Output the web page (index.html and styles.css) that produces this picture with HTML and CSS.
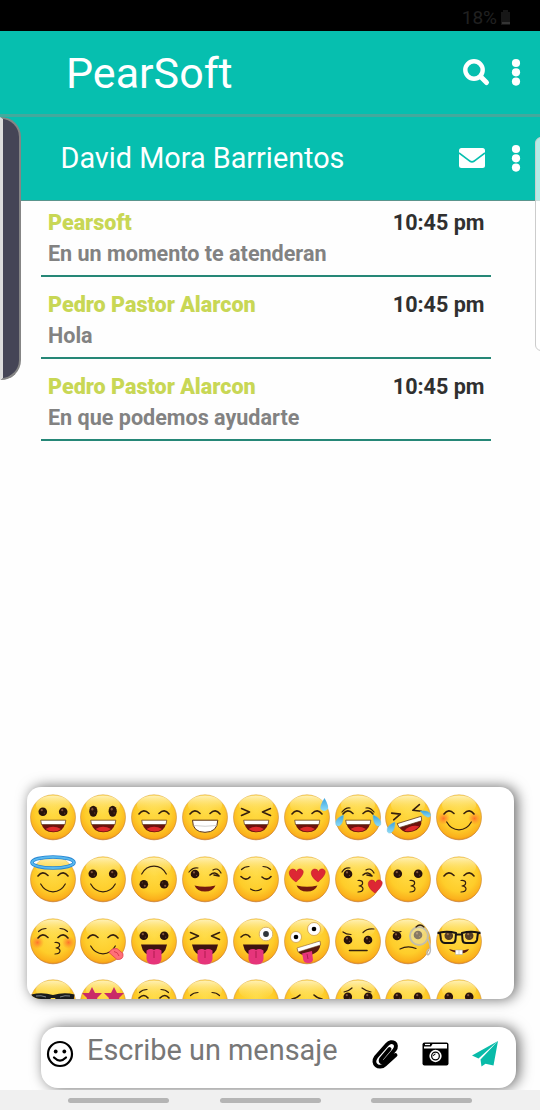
FILE: index.html
```html
<!DOCTYPE html>
<html lang="es">
<head>
<meta charset="utf-8">
<title>PearSoft</title>
<link rel="stylesheet" href="styles.css">
</head>
<body>
<svg class="defs" aria-hidden="true">
  <defs>
    <radialGradient id="skin" cx=".5" cy=".38" r=".66"><stop offset="0" stop-color="#ffdb45"/><stop offset=".6" stop-color="#fecd2a"/><stop offset=".86" stop-color="#fbb01c"/><stop offset="1" stop-color="#e27d10"/></radialGradient>
    <linearGradient id="shine" x2="0" y2="1"><stop stop-color="#fff7cf" stop-opacity=".85"/><stop offset="1" stop-color="#ffe25a" stop-opacity="0"/></linearGradient>
    <linearGradient id="rim" x2="0" y2="1"><stop stop-color="#dfae4c"/><stop offset="1" stop-color="#b8661a"/></linearGradient>
    <radialGradient id="blush"><stop stop-color="#ff642b" stop-opacity=".85"/><stop offset="1" stop-color="#ff812b" stop-opacity="0"/></radialGradient>
    <linearGradient id="water" x2="0" y2="1"><stop stop-color="#3aa3de"/><stop offset="1" stop-color="#8edcf7"/></linearGradient>
    <g id="face"><circle r="22.500" cy=".3" fill="url(#skin)" stroke="url(#rim)" stroke-width=".6"/><ellipse cy="-12" rx="17" ry="9.500" fill="url(#shine)"/></g>
    <g id="eye"><circle r="4.300" fill="#29130b"/><circle cx="-1" cy="-1.600" r="1.100" fill="#82533b"/><circle cx="1.500" cy="1.400" r=".6" fill="#6d402c"/></g>
    <g id="eyes"><use href="#eye" x="-10.200" y="-5.200"/><use href="#eye" x="10.200" y="-5.200"/></g>
    <g id="arcs" class="ink"><path d="M-15-3Q-10.500-9-5-3.500M5-3.500Q10.500-9 15-3"/></g>
    <g id="squint" class="ink"><path d="M-14.500-8.500-6.500-5-14.500-1.500M14.500-8.500 6.500-5 14.500-1.500"/></g>
    <g id="laugh"><path d="M-11.500 6.500H12Q10.500 15.300 .3 15.300Q-10 15.300-11.500 6.500Z" fill="#6e120e"/><path d="M-7.500 12Q0 7.500 8 12Q1 17-7.500 12Z" fill="#df2a2a"/><path d="M-12.300 3.200H12.800L12 7.600H-11.500Z" fill="#fff" stroke="#593117" stroke-width=".7" stroke-linejoin="round"/></g>
    <path id="smile" class="ink thin" d="M-12.300 5Q-8 12.800 0 12.800Q8 12.800 12.300 5"/>
    <path id="grin" d="M-10.500 6.500Q0 9 10.500 6.500Q8 12.500 0 12.500T-10.500 6.500Z" fill="#73190f"/>
    <path id="kiss" class="ink thin" d="M0 1.500C6 1 6 6 1 7C6.500 7 6.500 13 0 13"/>
    <path id="heart" d="M0 7C-10 0-7-6-3-6Q0-6 0-3Q2-7 5-6C10-4 6 2 0 7Z" fill="#dd2734" stroke="#b51c27" stroke-width=".5"/>
    <path id="tear" d="M4-6C-1-4-5-1-3.500 4C-1 7 4 4 4-6Z" fill="url(#water)" stroke="#75bdd7" stroke-width=".4"/>
    <g id="tongue"><path d="M-13 3.500H13Q11 15 0 15.500Q-11 15-13 3.500Z" fill="#3d1310"/><path d="M-7.500 9.500Q-3 7 0 9Q3 7 7.500 9.500V18Q7 23.500 0 23.500T-7.500 18Z" fill="#e6357b"/><path d="M0 10V17" stroke="#b01c50" stroke-width="1"/></g>
    <g id="blushes"><circle cx="-15.500" cy="1.500" r="6.500" fill="url(#blush)"/><circle cx="15.500" cy="1.500" r="6.500" fill="url(#blush)"/></g>
    <path id="brows" class="ink thin" d="M-14.500-9.500Q-11.500-12.500-7-12.500M7-12.500Q11.500-12.500 14.500-9.500"/>
    <path id="star" d="M0-9 3-3 10-3 5 2 8 10 0 6-7 10-5 2-10-3-3-3Z" fill="#c92a68"/>
    <g id="dots"><circle cx="5" cy="5" r="4.100"/><circle cx="5" cy="14.300" r="4.100"/><circle cx="5" cy="23.600" r="4.100"/></g>
  </defs>
</svg>

<div class="screen">
  <div class="status"><span>18%</span><svg width="11" height="15" viewBox="0 0 11 15"><path d="M3 0h5v2h2v13H1V2h2z" fill="#171717"/><path d="M2 12h8v2H2z" fill="#343434"/></svg></div>

  <header class="bar bar-app">
    <h1>PearSoft</h1>
    <svg class="search" width="28" height="28" viewBox="0 0 28 28"><circle cx="11" cy="11" r="8.700"/><path d="M18 18 23.500 23.500" stroke-width="5"/></svg>
    <svg class="more" width="10" height="29"><use href="#dots"/></svg>
  </header>
  <header class="bar bar-contact">
    <h2>David Mora Barrientos</h2>
    <svg class="mail" width="26" height="20" viewBox="0 0 26 20"><rect width="26" height="20" rx="2.500" fill="#fff"/><path d="M0 5 9.500 12.200Q13 15.500 16.500 12.200L26 5" fill="none" stroke="#06bfaf" stroke-width="1.600"/></svg>
    <svg class="more" width="10" height="29"><use href="#dots"/></svg>
  </header>

  <main class="messages">
    <article class="message"><div class="meta"><b>Pearsoft</b><time>10:45 pm</time></div><p>En un momento te atenderan</p></article>
    <article class="message"><div class="meta"><b>Pedro Pastor Alarcon</b><time>10:45 pm</time></div><p>Hola</p></article>
    <article class="message"><div class="meta"><b>Pedro Pastor Alarcon</b><time>10:45 pm</time></div><p>En que podemos ayudarte</p></article>
  </main>

  <section class="emoji-panel">
    <svg viewBox="-23 -23 46 46"><use href="#face"/><use href="#eyes"/><use href="#laugh"/></svg>
    <svg viewBox="-23 -23 46 46"><use href="#face"/><g transform="translate(0 1) scale(.95 1.300)"><use href="#eyes"/></g><use href="#laugh"/></svg>
    <svg viewBox="-23 -23 46 46"><use href="#face"/><use href="#arcs"/><use href="#laugh"/></svg>
    <svg viewBox="-23 -23 46 46"><use href="#face"/><use href="#arcs"/><path d="M-12.500 3.200H12.800Q12.500 15.300 0 15.300T-12.500 3.200Z" fill="#fff" stroke="#593117"/><path d="M-11 8.500Q0 10 11.500 8.500" fill="none" stroke="#bbb" stroke-width=".7"/></svg>
    <svg viewBox="-23 -23 46 46"><use href="#face"/><use href="#squint"/><use href="#laugh"/></svg>
    <svg viewBox="-23 -23 46 46"><use href="#face"/><use href="#arcs"/><use href="#laugh"/><path d="M17.500-19Q12.500-11 13.500-8Q17-4 21-8Q22-11 17.500-19Z" fill="url(#water)"/></svg>
    <svg viewBox="-23 -23 46 46"><use href="#face"/><use href="#arcs"/><path class="ink thin" d="M-16-5Q-12-10-8-9M8-9Q12-10 16-5"/><use href="#laugh"/><use href="#tear" x="-18.500" y="4"/><g transform="translate(19 4) scale(-1 1)"><use href="#tear"/></g></svg>
    <svg viewBox="-23 -23 46 46"><use href="#face"/><g transform="rotate(-17)"><use href="#squint"/><use href="#laugh"/></g><use href="#tear" x="-17" y="11"/><path d="M12-6Q20-7 22.500-3Q23 1 19 0Q15-2 12-6Z" fill="url(#water)" stroke="#75bdd7" stroke-width=".4"/></svg>
    <svg viewBox="-23 -23 46 46"><use href="#face"/><use href="#blushes"/><use href="#arcs"/><use href="#smile"/></svg>

    <svg viewBox="-23 -23 46 46"><use href="#face"/><use href="#arcs"/><use href="#smile"/><ellipse cy="-16.500" rx="21" ry="5.500" fill="none" stroke="#2684d1" stroke-width="3.600"/><ellipse cy="-16.500" rx="21" ry="5.500" fill="none" stroke="#58b9ef" stroke-width="2"/></svg>
    <svg viewBox="-23 -23 46 46"><use href="#face"/><use href="#eyes"/><use href="#smile"/></svg>
    <svg viewBox="-23 -23 46 46"><use href="#face"/><g transform="rotate(180)"><use href="#eyes"/><use href="#smile"/></g></svg>
    <svg viewBox="-23 -23 46 46"><use href="#face"/><use href="#eye" x="-10" y="-5"/><path class="ink thin" d="M-16-7Q-12-12-7-11M8-9Q13-12 16-6"/><path class="ink" d="M5-4Q10-8.500 14-3L9-4"/><use href="#grin"/></svg>
    <svg viewBox="-23 -23 46 46"><use href="#face"/><use href="#brows"/><path class="ink" d="M-15-2.500Q-10 2.500-6-2M6-2Q11 2.500 15-2.500"/><path class="ink thin" d="M-5.500 10Q0 13.500 5.500 10"/></svg>
    <svg viewBox="-23 -23 46 46"><use href="#face"/><use href="#heart" x="-11" y="-4"/><use href="#heart" x="11" y="-4"/><use href="#grin"/></svg>
    <svg viewBox="-23 -23 46 46"><use href="#face"/><use href="#eye" x="-10" y="-5"/><path class="ink thin" d="M-16-7Q-13-12-8-11M8-9Q13-12 16-6"/><path class="ink" d="M5-4Q10-8.500 14-3L9-4"/><use href="#kiss"/><use href="#heart" x="17" y="7"/></svg>
    <svg viewBox="-23 -23 46 46"><use href="#face"/><use href="#eyes"/><use href="#kiss" x="2"/></svg>
    <svg viewBox="-23 -23 46 46"><use href="#face"/><use href="#arcs"/><use href="#kiss" x="2"/></svg>

    <svg viewBox="-23 -23 46 46"><use href="#face"/><use href="#blushes"/><use href="#brows"/><use href="#arcs"/><use href="#kiss" x="2"/></svg>
    <svg viewBox="-23 -23 46 46"><use href="#face"/><use href="#arcs"/><use href="#smile"/><path d="M6 11.500Q9 6.500 14 7.500L20 12.500Q21 19 14 18.500Z" fill="#ff7078" stroke="#dc3749" stroke-width=".7"/><path d="M11 10.500Q15 11 16 15" fill="none" stroke="#d83c50"/></svg>
    <svg viewBox="-23 -23 46 46"><use href="#face"/><use href="#eyes"/><use href="#tongue"/></svg>
    <svg viewBox="-23 -23 46 46"><use href="#face"/><use href="#squint"/><use href="#tongue"/></svg>
    <svg viewBox="-23 -23 46 46"><use href="#face"/><path class="ink" d="M-15-4Q-10-9-6-4"/><circle cx="10" cy="-7" r="6.800" fill="#fff" stroke="#d8b46c"/><circle cx="10" cy="-7" r="2.900" fill="#30363b"/><use href="#tongue"/></svg>
    <svg viewBox="-23 -23 46 46"><use href="#face"/><circle cx="-11" cy="-4" r="5.500" fill="#fff" stroke="#c9943c" stroke-width=".7"/><circle cx="-11" cy="-4" r="2.300"/><circle cx="7" cy="-12" r="6.500" fill="#fff" stroke="#c9943c" stroke-width=".7"/><circle cx="7" cy="-12" r="2.300"/><path d="M-10 8 13 0Q15 11 3 14Q-8 16-10 8Z" fill="#561911"/><path d="M-10 7 13 0 13.500 4-9 11Z" fill="#fff" stroke="#76461e" stroke-width=".5"/><path d="M-5 12.500 5 10 6 19Q5 22.500 1 22Q-4 22-4 17Z" fill="#e6357b"/><path d="M0 13 1 18" stroke="#b01c50"/></svg>
    <svg viewBox="-23 -23 46 46"><use href="#face"/><use href="#eye" x="-10" y="-1"/><use href="#eye" x="10" y="-1"/><path class="ink thin" d="M-15-9Q-12-6.500-7-6.500M5-8.500Q9-13 16-12"/><path class="ink" d="M-8.500 9.500H9"/></svg>
    <svg viewBox="-23 -23 46 46"><use href="#face"/><use href="#eye" x="-11" y="-5"/><use href="#eye" x="10" y="-6"/><circle cx="11" cy="-5" r="9" fill="#e6e1be" fill-opacity=".5" stroke="#c3beaa" stroke-width="2"/><path d="M20-2Q25 11 20 14Q17 11 21 8" fill="none" stroke="#bbb" stroke-width="1.300"/><path class="ink thin" d="M-15-10Q-11-8-7-9.500M8-14Q12-18 16-14M-8 8Q0 4 8 7.500"/></svg>
    <svg viewBox="-23 -23 46 46"><use href="#face"/><use href="#eyes"/><path d="M-19-8.500Q-11-10-3-8L-3.500-1Q-4 2-7 2H-14Q-17 2-18-1ZM19-8.500Q11-10 3-8L3.500-1Q4 2 7 2H14Q17 2 18-1ZM-3-6.500H3M-19-7.500-21.500-8.500M19-7.500 21.500-8.500" fill="#ffe58d" fill-opacity=".2" stroke="#161312" stroke-width="2" stroke-linejoin="round"/><path d="M-10 8Q0 11 10 8Q8 13 0 12T-10 8Z" fill="#571b11"/><path d="M-3.500 9H3.500V13.500H-3.500ZM0 9V13.500" fill="#fff" stroke="#aaa" stroke-width=".5"/></svg>

    <svg viewBox="-23 -23 46 46"><use href="#face"/><path d="M-21.500-7.500Q-11-10 0-7Q11-10 21.500-7.500L20 3Q9 8 2-4H-2Q-9 8-20 3Z" fill="#181b1d"/><path d="M-17-6Q-12-7-7-5M7-5Q12-7 17-6" fill="none" stroke="#7b858a"/></svg>
    <svg viewBox="-23 -23 46 46"><use href="#face"/><use href="#star" x="-11" y="-6"/><use href="#star" x="11" y="-6"/></svg>
    <svg viewBox="-23 -23 46 46"><use href="#face"/><use href="#brows"/><path class="ink" d="M-15-4Q-10-9-6-4M6-4Q11-9 15-4"/></svg>
    <svg viewBox="-23 -23 46 46"><use href="#face"/><g transform="translate(0 3)"><use href="#brows"/></g></svg>
    <svg viewBox="-23 -23 46 46"><use href="#face"/></svg>
    <svg viewBox="-23 -23 46 46"><use href="#face"/><path class="ink" d="M-15-3Q-10-4-7-7M7-7Q10-4 15-3"/></svg>
    <svg viewBox="-23 -23 46 46"><use href="#face"/><use href="#eyes"/><path class="ink thin" d="M-14-10Q-9-11-6-14M4-14Q8-11 13-10"/></svg>
    <svg viewBox="-23 -23 46 46"><use href="#face"/><use href="#eyes"/></svg>
    <svg viewBox="-23 -23 46 46"><use href="#face"/><use href="#eyes"/></svg>
  </section>

  <section class="composer">
    <svg class="smiley" width="28" height="28" viewBox="0 0 28 28"><circle cx="14" cy="14" r="12" fill="none" stroke="#000" stroke-width="2.200"/><circle cx="9.700" cy="11.500" r="1.900"/><circle cx="18.300" cy="11.500" r="1.900"/><path d="M8 17.500Q14 23.500 20 17.500" fill="none" stroke="#000" stroke-width="2.200" stroke-linecap="round"/></svg>
    <span class="placeholder">Escribe un mensaje</span>
    <svg class="clip" width="28" height="32" viewBox="0 0 28 32"><path d="M18.500 11 10.500 20.500C8 24 11.500 26 14 23L23.500 12C28 6 21 1 16 6.500L5 19C0 26 8 32 14 26.500L24.500 17" fill="none" stroke="#000" stroke-width="3.900" stroke-linecap="round" stroke-linejoin="round"/></svg>
    <svg class="camera" width="27" height="24" viewBox="0 0 27 24"><rect x=".5" y=".5" width="26" height="23" rx="2"/><path d="M2 4.500H9L10.500 2H25V6.500H2Z" fill="#fff"/><path d="M3 2.500H8" stroke="#fff" stroke-width="1.200"/><circle cx="13.500" cy="14" r="5.300" fill="none" stroke="#fff" stroke-width="1.700"/><circle cx="13.500" cy="14" r="3.200" fill="#fff"/><path d="M11.500 14Q11.500 12 13.500 12" fill="none" stroke="#000"/></svg>
    <svg class="send" width="28" height="28" viewBox="0 0 28 28"><path d="M27 1 1 15.500 7.500 18.500ZM27 1 9.500 19.500 10.500 26.500 14.500 23.800 22.500 25.500Z" fill="#09bba9"/></svg>
  </section>

  <nav class="nav"><i></i><i></i><i></i></nav>
  <aside class="drawer-handle"></aside>
  <aside class="edge-handle"></aside>
</div>
</body>
</html>
```
FILE: styles.css
```css
* { box-sizing: border-box; }
body { margin: 0; font-family: Roboto, sans-serif; background: #fff; }
h1, h2, p { margin: 0; font-weight: 400; white-space: nowrap; }
svg { display: block; flex: none; }
.defs { position: absolute; width: 0; height: 0; }
.screen { position: relative; display: flex; flex-direction: column; width: 540px; height: 1110px; overflow: hidden; background: #fefefe; }

.status { flex: none; height: 31px; padding: 3px 29px 0 0; display: flex; justify-content: flex-end; align-items: center; gap: 3px; background: #000; color: #202020; font-size: 19px; }
.bar { flex: none; display: flex; align-items: center; background: #06bfaf; color: #fff; padding-right: 19px; }
.bar-app { height: 86px; padding-left: 66px; border-bottom: 3px solid #43a99d; }
.bar-contact { height: 84px; padding-left: 60.500px; border-bottom: 1px solid #59958d; }
h1 { flex: 1; font-size: 43px; line-height: 50px; }
h2 { flex: 1; padding-bottom: 2px; font-size: 28.800px; line-height: 34px; }
.search { margin-right: 20px; fill: none; stroke: #fff; stroke-width: 4.400; stroke-linecap: round; }
.more { fill: #fff; }
.mail { margin: 0 26px 2px 0; }

.messages { flex: none; display: flex; flex-direction: column; gap: 12px; width: 450px; height: 586px; margin-left: 41px; padding-top: 6px; }
.message { height: 70px; padding: 0 6.500px 0 7px; border-bottom: 2px solid #268777; font-size: 21.550px; font-weight: 700; line-height: 31px; }
.meta { display: flex; justify-content: space-between; }
.meta b { color: #c8d755; }
.meta time { color: #303030; }
.message p { color: #828282; font-weight: 700; }

.emoji-panel { flex: none; width: 487px; height: 212px; margin-left: 27px; padding: 7px 0 0 2.500px; display: grid; grid-template-columns: repeat(9, 46px); grid-auto-rows: 46px; gap: 15.800px 4.850px; overflow: hidden; background: #fff; border-radius: 14px; box-shadow: 3px 0 14px rgba(0, 0, 0, .6); }
.emoji-panel svg { width: 46px; height: 46px; overflow: visible; }
.ink { fill: none; stroke: #35200e; stroke-width: 1.600; stroke-linecap: round; stroke-linejoin: round; }
.thin { stroke-width: 1.200; }

.composer { flex: none; display: flex; align-items: center; width: 475px; height: 61px; margin: 28px 0 0 41px; padding: 0 17.500px 7px 4.500px; background: #fff; border-radius: 17px; box-shadow: 3px 0 14px rgba(0, 0, 0, .6); }
.placeholder { flex: 1; margin-left: 13.500px; padding-bottom: 8px; color: #777; font-size: 28.900px; line-height: 36px; white-space: nowrap; }
.clip { margin-right: 23px; }
.camera { margin-right: 22px; }

.nav { position: relative; flex: none; display: flex; gap: 50.500px; height: 20px; margin-top: 2px; padding: 8px 0 0 68px; background: #f0f0f0; }
.nav i { width: 101px; height: 5px; border-radius: 3px; background: #b5b5b5; }

.drawer-handle { position: absolute; left: 0; top: 117px; width: 21px; height: 263px; background: #454556; border: 2px solid #858585; border-left: 3px solid #ddd; border-radius: 0 20px 20px 0; }
.edge-handle { position: absolute; left: 534.500px; top: 137px; width: 12px; height: 214px; background: rgba(255, 255, 255, .7); border: 1px solid #ccc; border-radius: 7px; }
```
